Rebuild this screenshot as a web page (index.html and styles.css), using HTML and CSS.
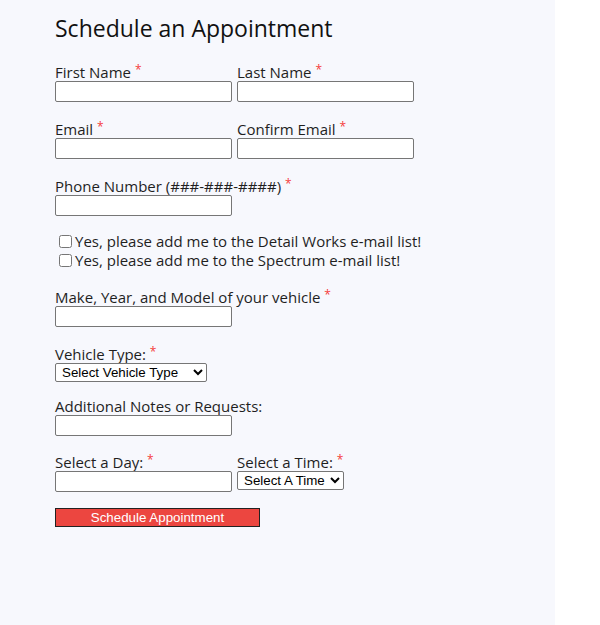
FILE: index.html
```html
<!DOCTYPE html>
<html lang="en">
<head>
<meta charset="utf-8">
<title>Schedule an Appointment</title>
<link rel="stylesheet" href="styles.css">
</head>
<body>
<div class="panel">
  <h1 class="title">Schedule an Appointment</h1>
  <form class="form">
    <div class="row">
      <div class="field">
        <label class="label">First Name <span class="req">*</span></label>
        <input class="input" type="text">
      </div>
      <div class="field">
        <label class="label">Last Name <span class="req">*</span></label>
        <input class="input" type="text">
      </div>
    </div>
    <div class="row">
      <div class="field">
        <label class="label">Email <span class="req">*</span></label>
        <input class="input" type="text">
      </div>
      <div class="field">
        <label class="label">Confirm Email <span class="req">*</span></label>
        <input class="input" type="text">
      </div>
    </div>
    <div class="row row-tight">
      <div class="field">
        <label class="label nowrap">Phone Number (###-###-####) <span class="req">*</span></label>
        <input class="input" type="text">
      </div>
    </div>
    <div class="checks">
      <label class="check"><input type="checkbox" class="box">Yes, please add me to the Detail Works e-mail list!</label>
      <label class="check"><input type="checkbox" class="box">Yes, please add me to the Spectrum e-mail list!</label>
    </div>
    <div class="row">
      <div class="field">
        <label class="label nowrap">Make, Year, and Model of your vehicle <span class="req">*</span></label>
        <input class="input" type="text">
      </div>
    </div>
    <div class="row row-tight">
      <div class="field">
        <label class="label">Vehicle Type: <span class="req">*</span></label>
        <select class="select select-vehicle"><option>Select Vehicle Type</option></select>
      </div>
    </div>
    <div class="row row-notes">
      <div class="field">
        <label class="label nowrap">Additional Notes or Requests:</label>
        <input class="input" type="text">
      </div>
    </div>
    <div class="row row-tight">
      <div class="field">
        <label class="label">Select a Day: <span class="req">*</span></label>
        <input class="input" type="text">
      </div>
      <div class="field">
        <label class="label">Select a Time: <span class="req">*</span></label>
        <select class="select select-time"><option>Select A Time</option></select>
      </div>
    </div>
    <div class="actions">
      <button type="button" class="submit">Schedule Appointment</button>
    </div>
  </form>
</div>
</body>
</html>
```
FILE: styles.css
```css
html, body {
  margin: 0;
  padding: 0;
  background: #ffffff;
}
.panel {
  width: 555px;
  min-height: 625px;
  box-sizing: border-box;
  background: #f7f8fd;
  padding: 12px 0 0 55px;
  font-family: "Open Sans", "Liberation Sans", sans-serif;
  color: #1f1f1f;
}
.title {
  margin: 0 0 20px 0;
  font-size: 23px;
  line-height: 32px;
  font-weight: 400;
  color: #111;
}
.form {
  display: flex;
  flex-direction: column;
}
.row {
  display: flex;
  gap: 5px;
  margin-bottom: 19px;
}
.row-tight {
  margin-bottom: 16px;
}
.row-notes {
  margin-bottom: 18px;
}
.field {
  display: flex;
  flex-direction: column;
  align-items: flex-start;
  width: 177px;
}
.label {
  font-size: 15px;
  line-height: 17px;
  height: 17px;
}
.nowrap {
  white-space: nowrap;
}
.req {
  color: #f53b3b;
  font-size: 12px;
  vertical-align: 4px;
  line-height: 0;
}
.input {
  box-sizing: border-box;
  width: 177px;
  height: 21px;
  margin: 0;
  border: 1px solid #767676;
  border-radius: 2px;
  background: #fff;
}
.select {
  box-sizing: border-box;
  height: 19px;
  margin: 0;
  padding: 0 0 0 2px;
  font-family: "Liberation Sans", Arial, sans-serif;
  font-size: 13.33px;
  color: #000;
  border: 1px solid #767676;
  border-radius: 2px;
  background: #fff;
}
.select-vehicle {
  width: 152px;
}
.select-time {
  width: 107px;
}
.checks {
  display: flex;
  flex-direction: column;
  margin: 0 0 19px 0;
}
.check {
  display: flex;
  align-items: center;
  font-size: 15px;
  line-height: 19px;
  height: 19px;
  white-space: nowrap;
}
.box {
  width: 13px;
  height: 13px;
  margin: 0 3px 0 4px;
}
.actions {
  display: flex;
}
.submit {
  width: 205px;
  height: 19px;
  padding: 0;
  margin: 0;
  background: #ec4640;
  color: #fff;
  border: 1px solid #222;
  border-radius: 0;
  font-family: "Liberation Sans", Arial, sans-serif;
  font-size: 13.33px;
  line-height: 17px;
}
```
